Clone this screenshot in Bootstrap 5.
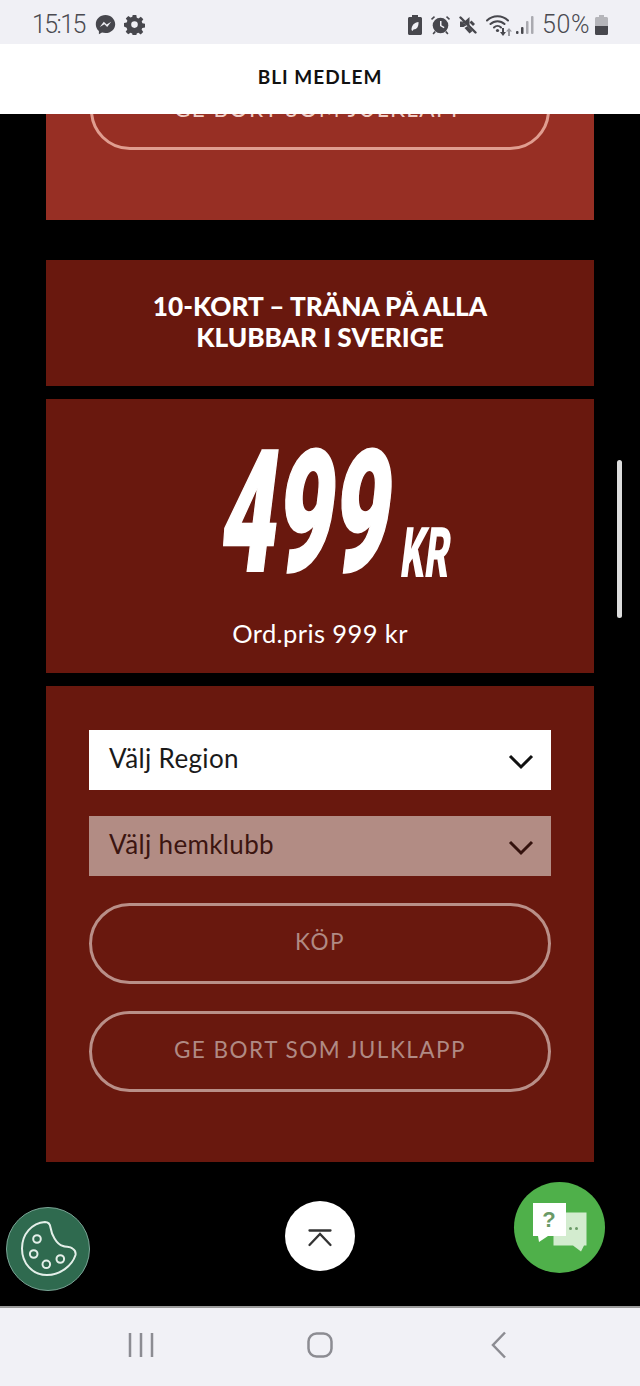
<!DOCTYPE html>
<html lang="sv">
<head>
    <meta charset="UTF-8">
    <meta name="viewport" content="width=device-width, initial-scale=1.0">
    <title>10-kort</title>
    <link href="https://cdn.jsdelivr.net/npm/bootstrap@5.3.0/dist/css/bootstrap.min.css" rel="stylesheet">
    <style>
        html, body { height: 100%; }
        body {
            background-color: #000;
            font-family: "Lato", "Liberation Sans", sans-serif;
            width: 640px;
            height: 1386px;
            overflow: hidden;
            position: relative;
        }
        .status-bar {
            height: 44px;
            background-color: #f0f0f5;
            color: #4a4a50;
            padding: 5px 32px 0 32px;
            font-family: "Roboto", sans-serif;
            font-size: 25px;
            font-weight: 300;
        }
        .status-bar svg { display: block; fill: #47474d; }
        .clock-text { letter-spacing: -1.6px; margin-right: 10px; }
        .pct-text { letter-spacing: .6px; margin-right: 5px; }
        .icon-set { gap: 9px; }
        .top-bar {
            height: 70px;
            background-color: #fff;
            color: #111;
            font-size: 19px;
            font-weight: 700;
            letter-spacing: 1px;
            padding-bottom: 4px;
        }
        .page-area {
            height: 1192px;
            overflow: hidden;
            padding: 0 46px;
        }
        .panel-old {
            display: flow-root;
            background-color: #972f24;
            height: 106px;
            padding: 0 44px;
            margin-bottom: 40px;
        }
        .btn-old {
            height: 80px;
            margin-top: -44px;
            padding-bottom: 3px;
            border: 3px solid #e09d90;
            border-radius: 40px;
            color: #f0cfc8;
            font-size: 22.5px;
            letter-spacing: 1.5px;
        }
        .panel-dark { background-color: #69180e; color: #fff; }
        .panel-title {
            height: 126px;
            margin-bottom: 13px;
            padding-bottom: 2px;
            font-size: 26.2px;
            font-weight: 900;
            line-height: 31px;
        }
        .panel-price { height: 274px; margin-bottom: 13px; padding-top: 49px; }
        .price-line { height: 130px; padding-left: 170px; }
        .price-num {
            display: block;
            flex: 0 0 183px;
            min-width: 0;
            font-family: "Roboto", sans-serif;
            font-weight: 900;
            font-size: 170px;
            line-height: 130px;
            transform: skewX(-7deg) scaleX(.57);
            transform-origin: left bottom;
            -webkit-text-stroke: 2px #fff;
            text-align: left;
            white-space: nowrap;
        }
        .price-kr {
            display: block;
            flex: 0 0 50px;
            min-width: 0;
            font-family: "Roboto", sans-serif;
            font-weight: 900;
            font-size: 70px;
            line-height: 50px;
            transform: skewX(-7deg) scaleX(.54);
            transform-origin: left bottom;
            text-align: left;
        }
        .price-old { font-size: 25.5px; letter-spacing: .4px; margin-top: 36px; }
        .panel-form { height: 476px; padding: 44px 43px 0; }
        .pick-box {
            height: 60px;
            padding: 0 16px 4px 20px;
            font-size: 26px;
            letter-spacing: .35px;
            margin-bottom: 26px;
            color: #1a1a1a;
            background-color: #fff;
        }
        .pick-box svg { margin-top: 7px; }
        .pick-off { background-color: #b28c84; color: #3c1510; margin-bottom: 27px; }
        .btn-ring {
            height: 81px;
            padding-bottom: 4px;
            border: 3px solid #b98f88;
            border-radius: 41px;
            color: #b08a84;
            font-size: 22.5px;
            letter-spacing: 1.5px;
            margin-bottom: 27px;
        }
        .nav-bottom {
            position: absolute;
            left: 0;
            right: 0;
            bottom: 0;
            height: 80px;
            background-color: #f1f1f6;
            border-top: 2px solid #9b9b9b;
            padding: 0 0 4px 128px;
        }
        .nav-home { margin-left: 153px; }
        .nav-back { margin-left: 157px; }
        .scroll-thumb {
            position: absolute;
            left: 617px;
            top: 460px;
            width: 5px;
            height: 158px;
            border-radius: 3px;
            background-color: #ddd;
        }
        .float-btn {
            position: absolute;
            border-radius: 50%;
        }
        .float-cookie {
            left: 6px;
            top: 1207px;
            width: 84px;
            height: 84px;
            background-color: #2f6a4f;
            border: 1px solid #7aa596;
        }
        .float-top {
            left: 285px;
            top: 1201px;
            width: 70px;
            height: 70px;
            background-color: #fff;
        }
        .float-top svg { margin-top: 4px; }
        .float-chat {
            left: 514px;
            top: 1182px;
            width: 91px;
            height: 91px;
            background-color: #4fb04a;
        }
    </style>
</head>
<body>
    <div class="status-bar d-flex align-items-center justify-content-between">
        <div class="d-flex align-items-center">
            <span class="clock-text">15:15</span>
            <svg class="me-2" width="21" height="21" viewBox="0 0 21 21">
                <path d="M10.500 1C5 1 .8 5 .8 10.200c0 2.800 1.200 5.100 3.100 6.800v3.300l3.100-1.700c1.100.3 2.300.5 3.500.5 5.500 0 9.700-4 9.700-8.900S16 1 10.500 1z"/>
                <path d="M4.800 13l4-5.200 2.800 2.700 4.600-2.700-4 5.200-2.800-2.700z" fill="#f0f0f5"/>
            </svg>
            <svg width="21" height="21" viewBox="0 0 21 21">
                <path fill-rule="evenodd" d="M8.700 1h3.600l.5 2.700 1.700.7 2.300-1.600 2.500 2.500-1.600 2.300.7 1.700 2.600.5v3.600l-2.700.5-.7 1.700 1.600 2.300-2.500 2.500-2.300-1.600-1.700.7-.5 2.500H8.700l-.5-2.600-1.700-.7-2.300 1.600-2.500-2.500 1.600-2.300-.7-1.700L0 12.500V8.900l2.700-.5.700-1.700-1.600-2.300 2.500-2.500 2.300 1.600 1.700-.7zM10.500 7.300a3.300 3.300 0 1 0 0 6.600 3.300 3.300 0 0 0 0-6.600z"/>
            </svg>
        </div>
        <div class="d-flex align-items-center">
            <div class="icon-set d-flex align-items-center me-2">
                <svg width="14" height="20" viewBox="0 0 14 20">
                    <path d="M4 0h6v2h2.500c.8 0 1.500.7 1.500 1.500v15c0 .8-.7 1.500-1.500 1.500h-11C.7 20 0 19.300 0 18.500v-15C0 2.700.7 2 1.500 2H4z"/>
                    <path d="M3.500 15c0-5 3-7.500 7-8 .3 4.500-1.500 7.500-5 7.500l-1 1.500z" fill="#f0f0f5"/>
                </svg>
                <svg width="19" height="20" viewBox="0 0 19 20">
                    <path d="M3 1L0 3.700l1 1.200 3-2.700zM16 1l3 2.700-1 1.200-3-2.700z"/>
                    <circle cx="9.500" cy="10.500" r="7.800"/>
                    <path d="M3.500 16l-2 2.500 1.200 1 2.200-2.500zM15.500 16l2 2.500-1.200 1-2.200-2.500z"/>
                    <path d="M9 6h1.500v4.300l3 1.700-.7 1.200-3.800-2.200z" fill="#f0f0f5"/>
                </svg>
                <svg width="18" height="18" viewBox="0 0 18 18">
                    <path d="M1 5.500h4.500L10.500 1v9zM1 5.500V11h3.500L8 9zM8.500 10l5 5-3 2.500-5-5.500z"/>
                    <path d="M12.500 4.500l3.500 3.500-2 2-3.500-3.500z"/>
                    <path d="M1.500 1.500l15 15" stroke="#47474d" stroke-width="2.400" stroke-linecap="round"/>
                </svg>
                <div class="d-flex align-items-end">
                    <svg class="me-1" width="26" height="23" viewBox="0 0 26 23">
                        <path d="M1 7.500a15 15 0 0 1 21 0M4.500 11a10 10 0 0 1 14 0M8 14.500a5 5 0 0 1 7 0" fill="none" stroke="#47474d" stroke-width="2" stroke-linecap="round"/>
                        <circle cx="11.500" cy="17.500" r="1.600"/>
                        <path d="M16 15h2v4h2l-3 4-3-4h2z"/>
                        <path d="M23 15l3 3.500h-2V23h-2v-4.500h-2z" fill="#9a9aa0"/>
                    </svg>
                    <svg width="18" height="21" viewBox="0 0 18 21">
                        <rect x="0" y="16" width="2.500" height="3" rx="1"/>
                        <rect x="5" y="12" width="2.500" height="7" rx="1"/>
                        <rect x="10" y="6" width="2.500" height="13" rx="1" fill="#aaaab0"/>
                        <rect x="15" y="1" width="2.500" height="18" rx="1" fill="#aaaab0"/>
                    </svg>
                </div>
            </div>
            <span class="pct-text">50%</span>
            <svg width="13" height="20" viewBox="0 0 13 20">
                <path d="M4 0h5v2h2.500c.8 0 1.500.7 1.500 1.500v15c0 .8-.7 1.500-1.500 1.500h-10C.7 20 0 19.300 0 18.500v-15C0 2.700.7 2 1.500 2H4z" fill="#b5b5ba"/>
                <path d="M0 11h13v7.500c0 .8-.7 1.500-1.500 1.500h-10C.7 20 0 19.300 0 18.500z"/>
            </svg>
        </div>
    </div>

    <div class="top-bar d-flex align-items-center justify-content-center">BLI MEDLEM</div>

    <div class="page-area">
        <div class="panel-old">
            <div class="btn-old d-flex align-items-center justify-content-center">GE BORT SOM JULKLAPP</div>
        </div>

        <div class="panel-dark panel-title d-flex align-items-center justify-content-center text-center">
            <div>10-KORT – TRÄNA PÅ ALLA<br>KLUBBAR I SVERIGE</div>
        </div>

        <div class="panel-dark panel-price text-center">
            <div class="price-line d-flex align-items-end">
                <span class="price-num">499</span>
                <span class="price-kr">KR</span>
            </div>
            <div class="price-old">Ord.pris 999 kr</div>
        </div>

        <div class="panel-dark panel-form">
            <div class="pick-box d-flex align-items-center justify-content-between">
                <span>Välj Region</span>
                <svg width="28" height="16" viewBox="0 0 28 16"><path d="M3 2l11 11L25 2" fill="none" stroke="#111" stroke-width="3"/></svg>
            </div>
            <div class="pick-box pick-off d-flex align-items-center justify-content-between">
                <span>Välj hemklubb</span>
                <svg width="28" height="16" viewBox="0 0 28 16"><path d="M3 2l11 11L25 2" fill="none" stroke="#34120d" stroke-width="3"/></svg>
            </div>
            <div class="btn-ring d-flex align-items-center justify-content-center">KÖP</div>
            <div class="btn-ring d-flex align-items-center justify-content-center">GE BORT SOM JULKLAPP</div>
        </div>
    </div>

    <div class="scroll-thumb"></div>

    <div class="float-btn float-cookie d-flex align-items-center justify-content-center">
        <svg width="60" height="60" viewBox="0 0 60 60" fill="none" stroke="#e4efe9" stroke-width="2">
            <path d="M27 3C30 3 32 5 32.500 8.500C33.500 15 38 25 45 27C48 28.500 52 27 54.500 29.500C57 31 58 33 57.500 36C54 47 42 56 29 56C14 56 4 44 4 29.500C4 15 14 4 27 3z"/>
            <circle cx="19" cy="20" r="3.800"/>
            <circle cx="15.700" cy="35" r="3.800"/>
            <circle cx="28.300" cy="45.300" r="3.800"/>
            <circle cx="42.300" cy="40" r="3.800"/>
        </svg>
    </div>

    <div class="float-btn float-top d-flex align-items-center justify-content-center">
        <svg width="26" height="18" viewBox="0 0 26 18" fill="none" stroke="#333" stroke-width="2.300" stroke-linecap="round">
            <path d="M2.500 1.500h21M2.500 16L13 5l10.500 11"/>
        </svg>
    </div>

    <div class="float-btn float-chat d-flex align-items-center justify-content-center">
        <svg width="56" height="52" viewBox="0 0 56 52">
            <path d="M33 10.500h21.500v33H52l-3 6-8-6H21.500V30H33z" fill="#d3eccf"/>
            <path d="M1 1h33v33H16l-9 6-1-6H1z" fill="#fff"/>
            <text x="17" y="24.500" text-anchor="middle" font-family="Liberation Sans" font-weight="700" font-size="22" fill="#6a9a66">?</text>
            <circle cx="38.500" cy="26.500" r="1.500" fill="#6a9a66"/>
            <circle cx="44.500" cy="26.500" r="1.500" fill="#6a9a66"/>
        </svg>
    </div>

    <div class="nav-bottom d-flex align-items-center">
        <svg width="26" height="26" viewBox="0 0 26 26" stroke="#8c8c92" stroke-width="2.500">
            <path d="M2 1v24M13 1v24M24 1v24"/>
        </svg>
        <svg class="nav-home" width="26" height="26" viewBox="0 0 26 26" fill="none" stroke="#8c8c92" stroke-width="2.500">
            <rect x="1.500" y="1.500" width="23" height="23" rx="8"/>
        </svg>
        <svg class="nav-back" width="18" height="28" viewBox="0 0 18 28" fill="none" stroke="#8c8c92" stroke-width="2.500">
            <path d="M15 1.500L3 14l12 12.500"/>
        </svg>
    </div>

    <script src="https://cdn.jsdelivr.net/npm/bootstrap@5.3.0/dist/js/bootstrap.bundle.min.js"></script>
</body>
</html>
